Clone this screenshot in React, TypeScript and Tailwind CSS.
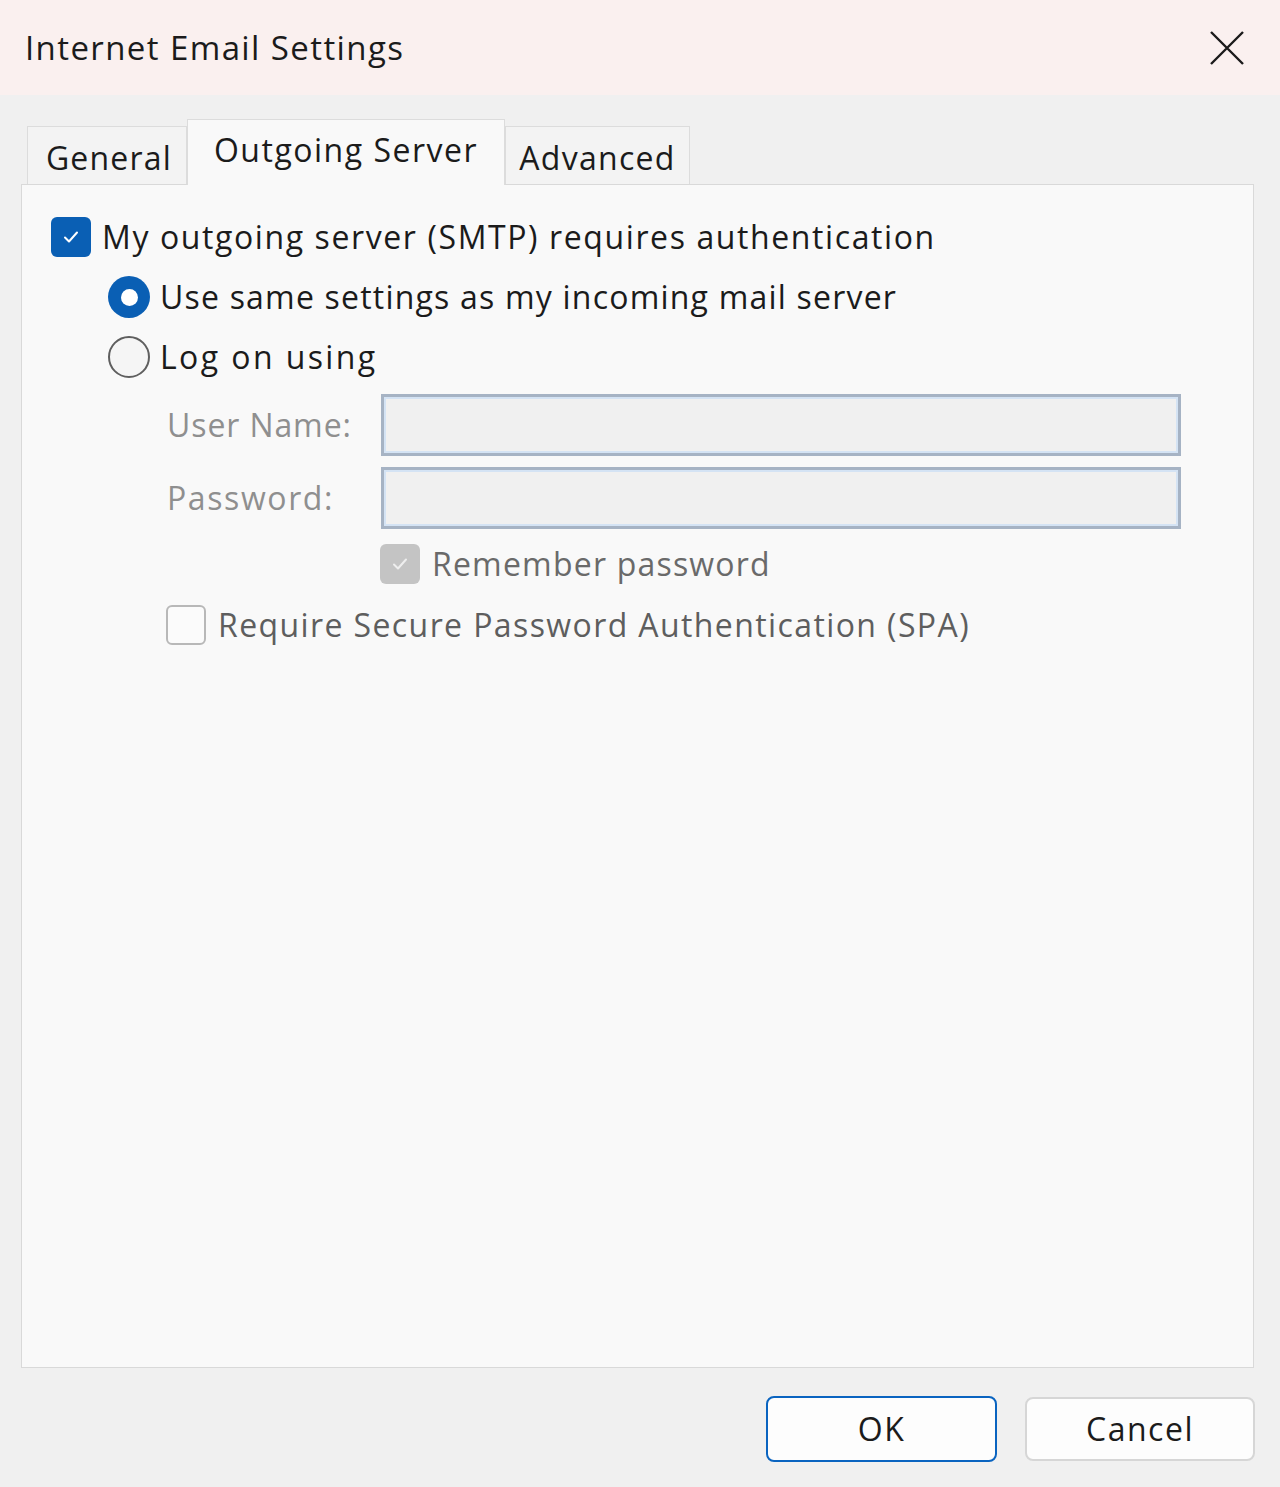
import React from "react";

function CheckMark({ color }: { color: string }) {
  return (
    <svg width="20" height="16" viewBox="0 0 20 16" fill="none">
      <path d="M4 8.5l4 4 8-9" stroke={color} strokeWidth="2" strokeLinecap="round" strokeLinejoin="round" />
    </svg>
  );
}

export default function App() {
  const font = { fontFamily: '"Open Sans", "Noto Sans", sans-serif' };

  return (
    <div className="w-[1280px] h-[1487px] flex flex-col bg-[#f0f0f0] text-[#1b1b1b]" style={font}>
      {/* title bar */}
      <div className="h-[95px] bg-[#faf0ef] flex items-center justify-between pl-[25px] pr-[36px]">
        <span className="text-[33px] tracking-[1.4px]">Internet Email Settings</span>
        <svg width="34" height="34" viewBox="0 0 34 34">
          <path d="M1 1L33 33M33 1L1 33" stroke="#1b1b1b" strokeWidth="2.4" />
        </svg>
      </div>

      <div className="flex-1 flex flex-col px-[21px] pt-[25px]">
        {/* tabs */}
        <div className="flex items-end pl-[6px] h-[64px]">
          <div className="w-[160px] h-[58px] border border-b-0 border-[#dcdcdc] bg-[#f3f3f3] flex items-center justify-center text-[32px] tracking-[1.2px] pt-[4px] pl-[4px]">
            General
          </div>
          <div className="w-[318px] h-[66px] -mb-px border border-b-0 border-[#dcdcdc] bg-[#f9f9f9] flex items-center justify-center text-[32px] tracking-[1.5px] pb-[6px] relative z-10">
            Outgoing Server
          </div>
          <div className="w-[185px] h-[58px] border border-b-0 border-[#dcdcdc] bg-[#f3f3f3] flex items-center justify-center text-[32px] tracking-[1.3px] pt-[4px]">
            Advanced
          </div>
        </div>

        {/* panel */}
        <div className="h-[1184px] w-[1233px] bg-[#f9f9f9] border border-[#d9d9d9] flex flex-col pl-[29px] pt-[32px] text-[32px] tracking-[1.6px]">
          <div className="flex items-center h-[40px] gap-[11px]">
            <div className="w-[40px] h-[40px] rounded-[6px] bg-[#0a5fb4] flex items-center justify-center">
              <CheckMark color="#ffffff" />
            </div>
            <span>My outgoing server (SMTP) requires authentication</span>
          </div>

          <div className="flex items-center h-[42px] gap-[10px] ml-[57px] mt-[19px]">
            <div className="w-[42px] h-[42px] rounded-full bg-[#0a5fb4] flex items-center justify-center">
              <div className="w-[17px] h-[17px] rounded-full bg-white" />
            </div>
            <span className="tracking-[1.2px]">Use same settings as my incoming mail server</span>
          </div>

          <div className="flex items-center h-[42px] gap-[10px] ml-[57px] mt-[18px]">
            <div className="w-[42px] h-[42px] rounded-full border-[2px] border-[#5f5f5f] bg-[#f5f5f5]" />
            <span className="tracking-[2.4px]">Log on using</span>
          </div>

          <div className="flex items-center ml-[116px] mt-[16px] h-[62px]">
            <span className="w-[214px] text-[#8f8f8f] tracking-[0.9px]">User Name:</span>
            <div className="w-[800px] h-[62px] border-[3px] border-[#a6b3c4] bg-[#f0f0f0] shadow-[inset_0_0_0_2px_#d4e3f4]" />
          </div>

          <div className="flex items-center ml-[116px] mt-[11px] h-[62px]">
            <span className="w-[214px] text-[#8f8f8f]">Password:</span>
            <div className="w-[800px] h-[62px] border-[3px] border-[#a6b3c4] bg-[#f0f0f0] shadow-[inset_0_0_0_2px_#d4e3f4]" />
          </div>

          <div className="flex items-center ml-[329px] mt-[15px] h-[40px] gap-[12px]">
            <div className="w-[40px] h-[40px] rounded-[6px] bg-[#c4c4c4] flex items-center justify-center">
              <CheckMark color="#eeeeee" />
            </div>
            <span className="text-[#6a6a6a] tracking-[1.2px]">Remember password</span>
          </div>

          <div className="flex items-center ml-[115px] mt-[21px] h-[40px] gap-[12px]">
            <div className="w-[40px] h-[40px] rounded-[6px] border-[2px] border-[#b8b8b8] bg-[#fbfbfb]" />
            <span className="text-[#5e5e5e] tracking-[1.4px]">Require Secure Password Authentication (SPA)</span>
          </div>
        </div>

        {/* buttons */}
        <div className="flex justify-end gap-[28px] mt-[28px] pr-[4px]">
          <button className="w-[231px] h-[66px] rounded-[8px] border-[2px] border-[#0a64c0] bg-[#fdfdfd] text-[32px] tracking-[1.5px]">OK</button>
          <button className="w-[230px] h-[64px] mt-[1px] rounded-[8px] border-[2px] border-[#d6d6d6] bg-[#fdfdfd] text-[32px] tracking-[1.5px]">Cancel</button>
        </div>
      </div>
    </div>
  );
}
